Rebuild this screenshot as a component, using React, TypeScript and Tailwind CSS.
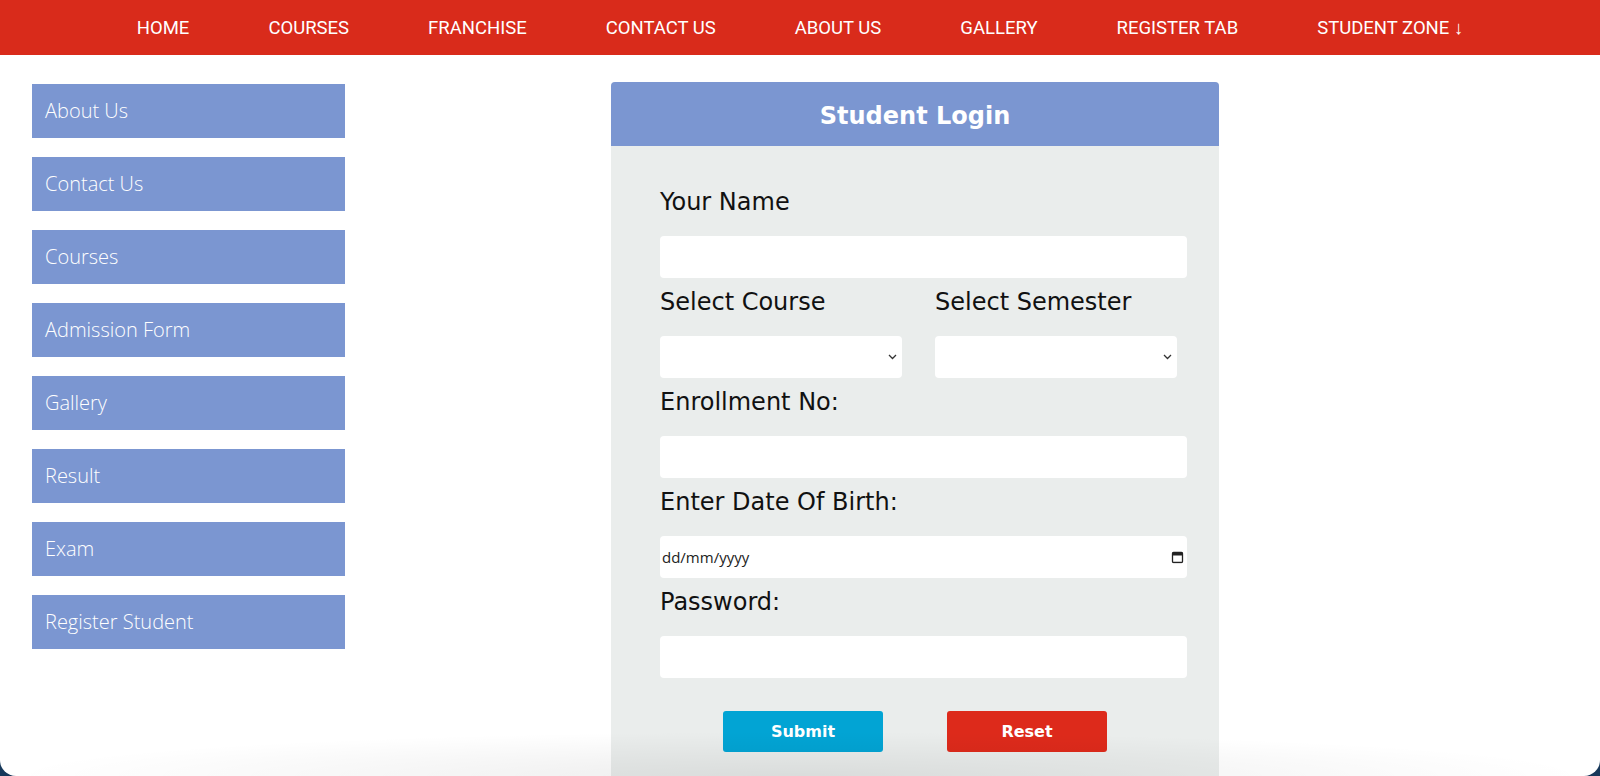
import React from "react";

const navLinks = [
  "HOME",
  "COURSES",
  "FRANCHISE",
  "CONTACT US",
  "ABOUT US",
  "GALLERY",
  "REGISTER TAB",
  "STUDENT ZONE ↓",
];

const sideLinks = [
  "About Us",
  "Contact Us",
  "Courses",
  "Admission Form",
  "Gallery",
  "Result",
  "Exam",
  "Register Student",
];

const labelCls =
  "block text-[24px] leading-[28px] text-[#111] font-['DejaVu_Sans',Verdana,sans-serif]";
const inputCls =
  "block h-[42px] w-full rounded-[4px] bg-white px-2 text-[15px] outline-none";

function Chevron() {
  return (
    <svg
      className="pointer-events-none absolute right-[5px] top-1/2 -translate-y-1/2"
      width="9"
      height="6"
      viewBox="0 0 9 6"
      fill="none"
    >
      <path d="M1 1l3.5 3.5L8 1" stroke="#333" strokeWidth="1.3" />
    </svg>
  );
}

function SelectBox() {
  return (
    <div className="relative w-[242px]">
      <select className="block h-[42px] w-full appearance-none rounded-[4px] bg-white px-2 outline-none">
        <option value=""></option>
      </select>
      <Chevron />
    </div>
  );
}

function Field({ label, children }: { label: string; children: React.ReactNode }) {
  return (
    <div className="mb-[10px]">
      <label className={labelCls}>{label}</label>
      <div className="mt-[20px]">{children}</div>
    </div>
  );
}

export default function App() {
  return (
    <div className="h-[776px] overflow-hidden bg-[#17385a]">
      <div className="relative h-full overflow-hidden rounded-b-[16px] bg-white">
        {/* top menu */}
        <nav className="flex h-[55px] items-center justify-center gap-[79px] bg-[#d92b1b] pt-[3px] font-['Roboto',sans-serif] text-[18.5px] text-white">
          {navLinks.map((l) => (
            <a key={l} href="#" className="whitespace-nowrap">
              {l}
            </a>
          ))}
        </nav>

        <div className="flex items-start">
          {/* side menu */}
          <aside className="ml-[32px] mt-[29px] flex w-[313px] flex-col gap-[19px]">
            {sideLinks.map((l) => (
              <a
                key={l}
                href="#"
                className="flex h-[54px] items-center bg-[#7b96d1] pl-[13px] font-['Open_Sans',sans-serif] text-[20px] font-light text-white"
              >
                {l}
              </a>
            ))}
          </aside>

          {/* login card */}
          <section className="ml-[266px] mt-[27px] w-[608px] overflow-hidden rounded-t-[4px] bg-[#eaedec]">
            <h1 className="flex h-[64px] items-center justify-center bg-[#7b96d1] pt-[3px] font-['DejaVu_Sans',Verdana,sans-serif] text-[24px] font-bold text-white">
              Student Login
            </h1>
            <form className="pb-[60px] pl-[49px] pr-[32px] pt-[42px]">
              <Field label="Your Name">
                <input type="text" className={inputCls} />
              </Field>

              <div className="mb-[10px] flex gap-[33px]">
                <div>
                  <label className={labelCls}>Select Course</label>
                  <div className="mt-[20px]">
                    <SelectBox />
                  </div>
                </div>
                <div>
                  <label className={labelCls}>Select Semester</label>
                  <div className="mt-[20px]">
                    <SelectBox />
                  </div>
                </div>
              </div>

              <Field label="Enrollment No:">
                <input type="text" className={inputCls} />
              </Field>

              <Field label="Enter Date Of Birth:">
                <div className="relative">
                  <input
                    type="text"
                    placeholder="dd/mm/yyyy"
                    className="block h-[42px] w-full rounded-[4px] bg-white pl-[2px] font-['Open_Sans',sans-serif] text-[15px] text-[#222] outline-none placeholder:text-[#222]"
                  />
                  <svg
                    className="pointer-events-none absolute right-[3px] top-1/2 -translate-y-1/2"
                    width="13"
                    height="13"
                    viewBox="0 0 13 13"
                    fill="none"
                  >
                    <rect x="1.5" y="2" width="10" height="10" rx="1" stroke="#222" strokeWidth="1.3" />
                    <rect x="1.5" y="2" width="10" height="3" fill="#222" />
                  </svg>
                </div>
              </Field>

              <Field label="Password:">
                <input type="password" className={inputCls} />
              </Field>

              <div className="mt-[33px] flex justify-center gap-[64px] pr-[17px] font-['DejaVu_Sans',Verdana,sans-serif] text-[16px] font-bold text-white">
                <button type="submit" className="h-[41px] w-[160px] rounded-[3px] bg-[#02a4d4]">
                  Submit
                </button>
                <button type="reset" className="h-[41px] w-[160px] rounded-[3px] bg-[#dd2a1b]">
                  Reset
                </button>
              </div>
            </form>
          </section>
        </div>

        {/* soft shade along the bottom edge */}
        <div className="pointer-events-none absolute inset-x-0 bottom-0 h-[45px] bg-[radial-gradient(ellipse_at_bottom,rgba(0,0,0,0.07),transparent_70%)]" />
      </div>
    </div>
  );
}
